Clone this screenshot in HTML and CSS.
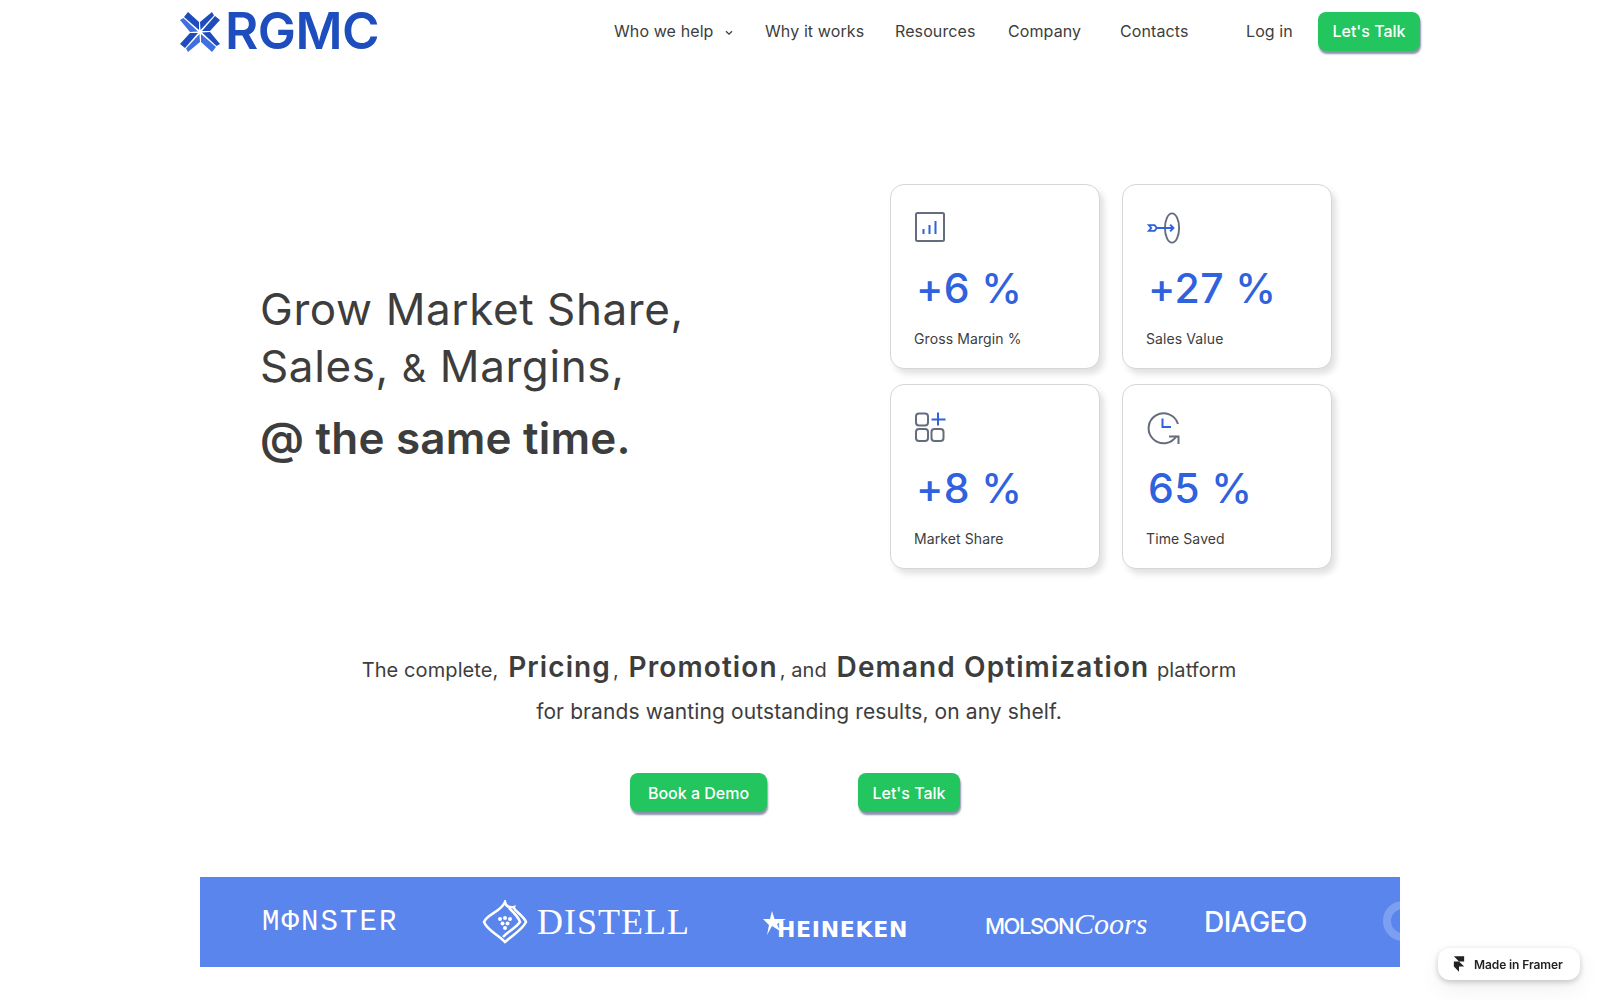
FILE: index.html
```html
<!DOCTYPE html>
<html lang="en">
<head>
<meta charset="utf-8">
<title>RGMC</title>
<link rel="stylesheet" href="styles.css">
</head>
<body>
<header class="nav">
  <a class="logo">
    <svg class="logo-mark" viewBox="0 0 40 40" width="40" height="40">
      <g id="q"><polygon class="d" points="8,0 19,10 19,18 4,5"/><polygon class="l" points="0,8 10,20 18,19.5 3.5,6"/></g>
      <g transform="rotate(90 20 20)"><polygon class="d" points="8,0 19,10 19,18 4,5"/><polygon class="d" points="0,8 10,20 18,19.5 3.5,6"/></g>
      <g transform="rotate(180 20 20)"><polygon class="l" points="8,0 19,10 19,18 4,5"/><polygon class="d" points="0,8 10,20 18,19.5 3.5,6"/></g>
      <g transform="rotate(270 20 20)"><polygon class="d" points="8,0 19,10 19,18 4,5"/><polygon class="l" points="0,8 10,20 18,19.5 3.5,6"/></g>
    </svg>
    <span class="logo-text">RGMC</span>
  </a>
  <nav class="menu">
    <a class="item item-help">Who we help <svg class="chev" viewBox="0 0 8 6" width="8" height="6"><path d="M1 1.2 4 4.2 7 1.2"/></svg></a>
    <a class="item item-why">Why it works</a>
    <a class="item item-res">Resources</a>
    <a class="item item-com">Company</a>
    <a class="item item-con">Contacts</a>
    <a class="item item-log">Log in</a>
    <a class="btn btn-nav">Let's Talk</a>
  </nav>
</header>

<main>
  <section class="hero">
    <div class="headline">
      <h1 class="hl">Grow Market Share,</h1>
      <h1 class="hl">Sales, <span class="amp">&amp;</span> Margins,</h1>
      <h2 class="hl-bold">@ the same time.</h2>
    </div>
    <div class="cards">
      <article class="card">
        <svg class="ico" viewBox="0 0 32 32" width="32" height="32">
          <rect class="g" x="2" y="2" width="28" height="28" rx="1.5"/>
          <path class="b" d="M9.5 23v-5M15.5 23v-9M21.5 23V10"/>
        </svg>
        <div class="num">+6 %</div>
        <div class="lab">Gross Margin %</div>
      </article>
      <article class="card">
        <svg class="ico ico-w" viewBox="0 0 36 36" width="36" height="36">
          <ellipse class="g" cx="26.5" cy="18" rx="7.5" ry="15.5"/>
          <path class="b" d="M9 18h19M24.5 14.5 28 18l-3.5 3.500M2 15h6l2.500 3L8 21H2l2.500-3z"/>
        </svg>
        <div class="num">+27 %</div>
        <div class="lab">Sales Value</div>
      </article>
      <article class="card">
        <svg class="ico" viewBox="0 0 34 32" width="34" height="32">
          <rect class="g" x="2" y="2.500" width="12" height="12" rx="3"/>
          <rect class="g" x="2" y="18" width="12" height="12" rx="3"/>
          <rect class="g" x="17.500" y="18" width="12" height="12" rx="3"/>
          <path class="b" d="M17.500 8.500h14M24 1.500v13"/>
        </svg>
        <div class="num">+8 %</div>
        <div class="lab">Market Share</div>
      </article>
      <article class="card">
        <svg class="ico ico-w" viewBox="0 0 36 34" width="36" height="34">
          <path class="g" d="M30.500 25A15 15 0 1 1 32 13"/>
          <path class="g" d="M23 25.500h9.500V33"/>
          <path class="b" d="M16.500 7.500V16H25"/>
        </svg>
        <div class="num">65 %</div>
        <div class="lab">Time Saved</div>
      </article>
    </div>
  </section>

  <section class="pitch">
    <p class="line-1">The complete, <b>Pricing</b>, <b>Promotion</b>, and <b>Demand Optimization</b> platform</p>
    <p class="line-2">for brands wanting outstanding results, on any shelf.</p>
    <div class="actions">
      <a class="btn btn-demo">Book a Demo</a>
      <a class="btn btn-talk">Let's Talk</a>
    </div>
  </section>

  <section class="brands">
    <span class="b-monster">MΦNSTER</span>
    <span class="b-distell">
      <svg class="distell-mark" viewBox="0 0 46 44" width="46" height="44">
        <path d="M23 2c1 5 5 6 9 5-1 3 10 9 12 15-4 8-12 12-21 20C15 34 5 30 2 22 5 14 19 12 23 2z"/>
        <path d="M27 8c3 3 9 8 11 14-5 7-12 9-17 15"/>
        <circle class="dot" cx="18" cy="19" r="2"/><circle class="dot" cx="23" cy="18" r="2"/><circle class="dot" cx="28" cy="19" r="2"/><circle class="dot" cx="20.500" cy="23.500" r="2"/><circle class="dot" cx="25.500" cy="23.500" r="2"/><circle class="dot" cx="23" cy="28" r="2"/>
      </svg>
      <span class="distell-text">DISTELL</span>
    </span>
    <span class="b-heineken">
      <svg class="star" viewBox="0 0 24 24" width="24" height="24"><polygon points="9,0 11.500,8 23,8 14,13 17,20 9,15 4,24 6,14 0,8 7,8"/></svg>
      <span class="hk-text">HEINEKEN</span>
    </span>
    <span class="b-molson"><span class="ms">MOLSON</span><span class="cr">Coors</span></span>
    <span class="b-diageo">DIAGEO</span>
    <span class="b-ghost"></span>
  </section>
</main>

<a class="framer">
  <svg viewBox="0 0 14 18" width="12" height="16"><path d="M1 0h12v6H7zM1 6h6l6 6H7v6l-6-6z"/></svg>
  <span>Made in Framer</span>
</a>
</body>
</html>
```

FILE: styles.css
```css
* { box-sizing: border-box; margin: 0; padding: 0; }
html, body { height: 1000px; overflow: hidden; }
body { background: #fff; color: #3d3d3d; font-family: Inter, "Noto Sans", sans-serif; }

.nav { display: flex; align-items: center; justify-content: space-between; height: 62px; padding: 0 180px; }
.logo { display: flex; align-items: center; gap: 5px; }
.logo-mark { flex: none; margin-top: 2px; }
.logo-mark .d { fill: #1f4cbc; }
.logo-mark .l { fill: #3f6fe0; }
.logo-text { font-size: 51px; font-weight: 600; letter-spacing: -0.5px; line-height: 62px; color: #1e4dbd; }

.menu { display: flex; align-items: center; }
.item { font-size: 16px; color: #3d3d3d; letter-spacing: 0.1px; white-space: nowrap; }
.item-help { width: 151px; }
.item-why { width: 130px; }
.item-res { width: 113px; }
.item-com { width: 112px; }
.item-con { width: 126px; }
.item-log { width: 72px; }
.chev { margin-left: 7px; vertical-align: 1px; fill: none; stroke: #3d3d3d; stroke-width: 1.300; }

.btn { display: flex; align-items: center; justify-content: center; height: 39px; color: #fff; background: #22c55e; border-radius: 8px; font-size: 16px; font-weight: 500; box-shadow: 1px 3px 2px #8b93aa; white-space: nowrap; }
.btn-nav { width: 102px; }

.hero { display: flex; align-items: center; height: 385px; margin-top: 122px; padding-left: 260px; }
.hero { margin-top: 122px; }
.headline { width: 630px; margin-top: 0; }
.hl { font-size: 44px; font-weight: 400; line-height: 57px; letter-spacing: 0.6px; color: #3d3d3d; }
.amp { font-size: 38px; }
.hl-bold { font-size: 44px; font-weight: 600; line-height: 70px; color: #3d3d3d; letter-spacing: 0.2px; margin-top: 6px; }

.cards { display: grid; grid-template-columns: 210px 210px; grid-auto-rows: 185px; column-gap: 22px; row-gap: 15px; }
.card { position: relative; background: #fff; border: 1px solid #d6d6d6; border-radius: 14px; box-shadow: 4px 5px 6px rgba(0, 0, 0, .12); padding: 26px 0 0 23px; }
.ico { display: block; height: 32px; margin-bottom: 20px; }
.ico .g { fill: none; stroke: #646c7d; stroke-width: 2; }
.ico .b { fill: none; stroke: #2f62dc; stroke-width: 2; }
.ico-w { height: 34px; margin-bottom: 18px; }
.num { font-size: 41px; line-height: 50px; font-weight: 500; color: #2f62dc; letter-spacing: 0.4px; padding-left: 2px; }
.lab { margin-top: 16px; font-size: 14px; line-height: 20px; color: #3d3d3d; letter-spacing: 0.1px; }

.pitch { text-align: center; margin-top: 78px; margin-left: -2px; }
.line-1 { font-size: 20px; line-height: 40px; letter-spacing: 0.1px; }
.line-1 b { font-size: 28px; font-weight: 600; letter-spacing: 1.1px; margin: 0 2px 0 4px; }
.line-2 { font-size: 21px; line-height: 44px; letter-spacing: 0.1px; }
.actions { display: flex; gap: 91px; justify-content: center; margin-top: 39px; margin-left: -8px; }
.btn-demo { width: 137px; }
.btn-talk { width: 102px; }

.brands { position: relative; display: flex; align-items: center; width: 1200px; height: 90px; margin: 65px 0 0 200px; background: #5985ed; color: #fff; overflow: hidden; white-space: nowrap; }
.b-monster { margin-left: 62px; width: 220px; font-family: "Liberation Mono", monospace; font-size: 29px; letter-spacing: 2.100px; }
.b-distell { display: flex; align-items: center; gap: 9px; width: 281px; }
.distell-mark { fill: none; stroke: #fff; stroke-width: 2.500; flex: none; }
.distell-mark .dot { fill: #fff; stroke: none; }
.distell-text { font-family: "Liberation Serif", serif; font-size: 36px; letter-spacing: 1px; }
.b-heineken { display: flex; align-items: flex-end; width: 222px; }
.star { fill: #fff; flex: none; margin: 0 -10px 8px 0; }
.hk-text { font-family: "DejaVu Sans", sans-serif; font-weight: 700; font-size: 22px; letter-spacing: 0.700px; line-height: 26px; margin-top: 16px; }
.b-molson { display: flex; align-items: baseline; width: 219px; margin-top: 4px; }
.ms { font-family: Inter, sans-serif; font-size: 22px; font-weight: 500; letter-spacing: -1.500px; }
.cr { font-family: "Liberation Serif", serif; font-style: italic; font-size: 30px; margin-left: 1px; }
.b-diageo { font-family: Inter, sans-serif; font-size: 28px; font-weight: 500; letter-spacing: -0.500px; }
.b-ghost { position: absolute; left: 1183px; top: 24px; width: 40px; height: 40px; border-radius: 50%; border: 8px solid rgba(255, 255, 255, .22); }

.framer { position: fixed; left: 1438px; top: 948px; display: flex; align-items: center; gap: 9px; width: 142px; height: 32px; padding-left: 15px; background: #fff; border-radius: 12px; box-shadow: 0 2px 6px rgba(0, 0, 0, .22), 0 10px 24px rgba(0, 0, 0, .06); font-size: 12px; font-weight: 600; color: #222; letter-spacing: -0.100px; }
.framer svg { fill: #222; flex: none; }
```
